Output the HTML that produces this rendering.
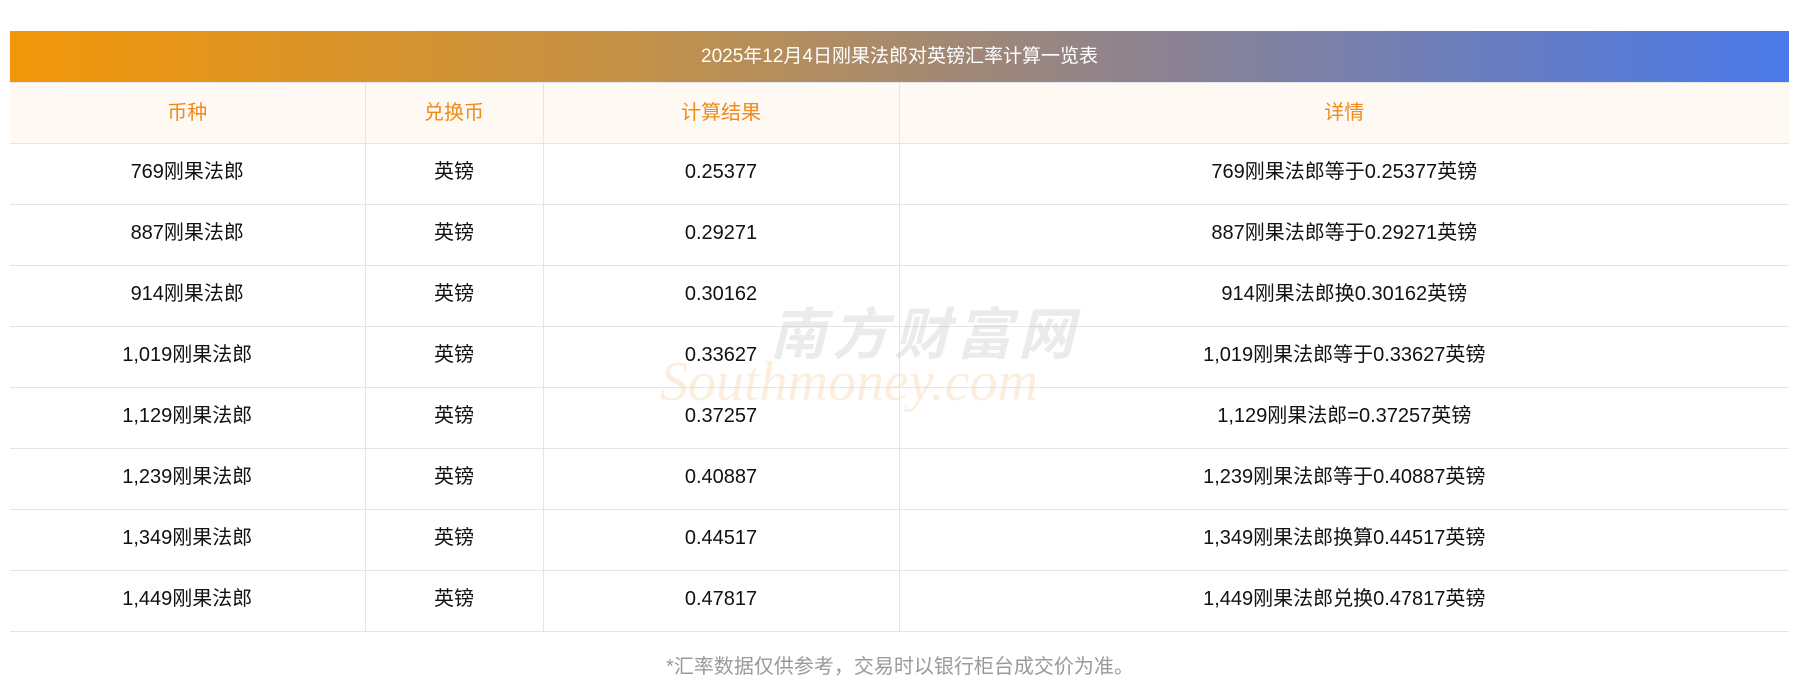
<!DOCTYPE html>
<html><head><meta charset="utf-8"><style>
body{margin:0;width:1800px;height:697px;background:#fff;font-family:"Liberation Sans","Noto Sans CJK SC",sans-serif;position:relative;overflow:hidden}
.t{position:absolute;left:10px;top:31px;width:1779px}
.title{height:51px;background:linear-gradient(90deg,#f29608,#c49248 35%,#8b8292 65%,#4a79ea);color:#fff;font-size:19px;text-align:center;line-height:51px}
table{border-collapse:collapse;width:1779px;table-layout:fixed}
td,th{border:1px solid #e2e5ee;text-align:center;font-size:20px;color:#111;height:60px;line-height:60px;vertical-align:middle;padding:0;font-weight:normal;font-family:"Liberation Sans","Noto Sans CJK SC",sans-serif}
td{line-height:56px;padding-bottom:4px;height:56px}
th{background:#fef9f3;color:#f08a1a}
tr td:first-child,tr th:first-child{border-left:none}
tr td:last-child,tr th:last-child{border-right:none}
.foot{position:absolute;top:650px;width:1800px;text-align:center;color:#9a9a9a;font-size:20px}
.wm{position:absolute;left:770px;top:290px;color:rgba(190,190,190,.3);font-size:56px;font-weight:bold;letter-spacing:6px;font-style:italic}
.wm2{position:absolute;left:660px;top:350px;color:rgba(245,200,150,.3);font-size:56px;font-style:italic;font-family:"Liberation Serif",serif}
</style></head><body>
<div class="t">
<div class="title">2025年12月4日刚果法郎对英镑汇率计算一览表</div>
<table>
<colgroup><col style="width:355px"><col style="width:178px"><col style="width:356px"><col></colgroup>
<tr><th>币种</th><th>兑换币</th><th>计算结果</th><th>详情</th></tr>
<tr><td>769刚果法郎</td><td>英镑</td><td>0.25377</td><td>769刚果法郎等于0.25377英镑</td></tr>
<tr><td>887刚果法郎</td><td>英镑</td><td>0.29271</td><td>887刚果法郎等于0.29271英镑</td></tr>
<tr><td>914刚果法郎</td><td>英镑</td><td>0.30162</td><td>914刚果法郎换0.30162英镑</td></tr>
<tr><td>1,019刚果法郎</td><td>英镑</td><td>0.33627</td><td>1,019刚果法郎等于0.33627英镑</td></tr>
<tr><td>1,129刚果法郎</td><td>英镑</td><td>0.37257</td><td>1,129刚果法郎=0.37257英镑</td></tr>
<tr><td>1,239刚果法郎</td><td>英镑</td><td>0.40887</td><td>1,239刚果法郎等于0.40887英镑</td></tr>
<tr><td>1,349刚果法郎</td><td>英镑</td><td>0.44517</td><td>1,349刚果法郎换算0.44517英镑</td></tr>
<tr><td>1,449刚果法郎</td><td>英镑</td><td>0.47817</td><td>1,449刚果法郎兑换0.47817英镑</td></tr>
</table>
</div>
<div class="wm">南方财富网</div>
<div class="wm2">Southmoney.com</div>
<div class="foot">*汇率数据仅供参考，交易时以银行柜台成交价为准。</div>
</body></html>
